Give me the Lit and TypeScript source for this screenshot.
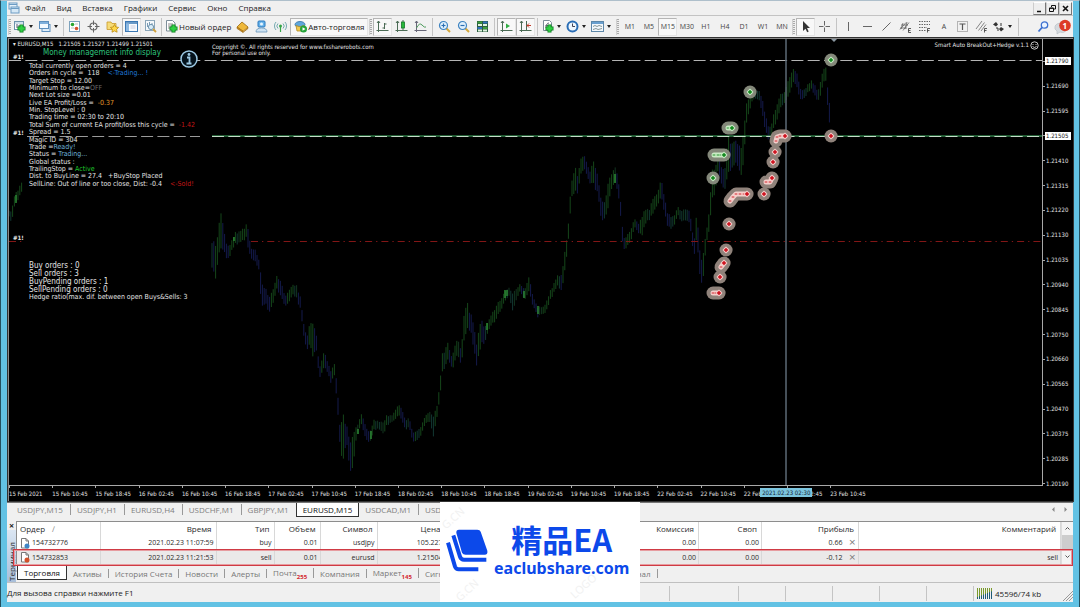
import { LitElement, html, svg, css } from "lit";
import { customElement } from "lit/decorators.js";
import { classMap } from "lit/directives/class-map.js";

/* Price path: x, high, low in chart units. */
const LEFT_BARS = [[9, 211, 216], [12, 210, 223], [14, 197, 208], [16, 193, 203], [18, 190, 200], [20, 184, 194], [23, 183, 192]];
const MAIN_BARS = [
  [212, 238, 268], [215, 240, 283], [218, 230, 262], [221, 209, 253], [225, 236, 255], [228, 247, 261], [232, 240, 250],
  [235, 232, 244], [240, 231, 243], [246, 225, 238], [248, 227, 249], [251, 247, 257], [255, 250, 263], [259, 260, 270],
  [261, 276, 306], [265, 288, 305], [270, 297, 314], [274, 285, 300], [277, 276, 290], [281, 281, 298], [285, 297, 307],
  [289, 289, 302], [293, 284, 294], [297, 286, 300], [301, 300, 312], [304, 325, 338], [307, 338, 352], [310, 320, 345],
  [313, 318, 360], [316, 332, 350], [319, 365, 376], [321, 365, 377], [324, 352, 370], [328, 362, 372], [331, 370, 383],
  [334, 362, 373], [337, 380, 400], [340, 428, 448], [343, 412, 474], [346, 422, 440], [350, 440, 474], [353, 430, 470],
  [356, 425, 440], [358, 425, 434], [361, 412, 422], [364, 422, 436], [367, 430, 442], [370, 432, 443], [374, 420, 430],
  [379, 421, 428], [384, 423, 436], [387, 415, 425], [392, 416, 422], [396, 410, 420], [399, 404, 415], [402, 408, 420],
  [405, 420, 430], [409, 418, 427], [413, 432, 441], [416, 430, 440], [420, 428, 437], [424, 420, 428], [427, 412, 420],
  [431, 412, 424], [433, 413, 438], [437, 405, 417], [440, 385, 400], [442, 350, 372], [445, 350, 368], [447, 338, 360],
  [451, 355, 365], [453, 352, 369], [456, 341, 358], [459, 342, 360], [461, 352, 368], [464, 310, 340], [467, 298, 332],
  [470, 312, 330], [473, 318, 345], [477, 345, 370], [480, 318, 350], [484, 325, 345], [488, 322, 332], [492, 314, 325],
  [496, 305, 320], [500, 300, 312], [505, 290, 300], [509, 288, 296], [513, 290, 311], [517, 290, 300], [520, 283, 290],
  [524, 290, 300], [529, 276, 292], [532, 293, 305], [535, 302, 310], [538, 307, 317], [542, 308, 314], [546, 303, 312],
  [550, 291, 300], [554, 284, 293], [558, 273, 284], [562, 276, 295], [565, 248, 270], [568, 228, 245], [570, 195, 215],
  [572, 180, 198], [575, 162, 192], [578, 175, 193], [580, 160, 178], [583, 154, 170], [587, 162, 175], [590, 170, 183],
  [593, 160, 185], [595, 160, 188], [598, 180, 198], [602, 200, 223], [605, 200, 218], [608, 180, 210], [611, 175, 192],
  [614, 165, 182], [617, 172, 190], [620, 190, 205], [622, 222, 240], [624, 237, 249], [628, 234, 246], [632, 225, 237],
  [635, 220, 228], [639, 223, 233], [642, 215, 237], [645, 208, 225], [649, 210, 220], [653, 198, 215], [657, 195, 208],
  [661, 178, 198], [664, 192, 210], [667, 212, 226], [670, 215, 229], [674, 215, 225], [678, 208, 216], [683, 210, 222],
  [687, 208, 220], [690, 212, 225], [692, 230, 245], [694, 240, 256], [697, 209, 240], [699, 240, 270], [701, 265, 292],
  [703, 250, 280], [705, 240, 260], [707, 226, 240], [710, 200, 225], [712, 170, 205], [715, 165, 195], [718, 158, 172],
  [722, 165, 185], [725, 165, 190], [728, 130, 178], [731, 140, 170], [734, 136, 165], [737, 140, 165], [740, 148, 180],
  [743, 130, 165], [746, 105, 130], [748, 97, 115], [752, 92, 102], [756, 90, 98], [760, 90, 100], [762, 98, 115],
  [765, 110, 128], [768, 125, 140], [771, 125, 137], [774, 112, 128], [778, 100, 118], [780, 94, 110], [784, 92, 103],
  [788, 82, 100], [791, 72, 90], [794, 68, 82], [798, 76, 92], [801, 90, 100], [806, 88, 96], [811, 80, 88],
  [815, 84, 95], [818, 92, 102], [821, 78, 95], [824, 68, 82], [826, 65, 80], [828, 90, 112], [831, 110, 135],
];
const BRIGHT = [[16, 195, 203], [371, 431, 439], [358, 429, 434], [487, 323, 330], [505, 290, 298], [507, 290, 296], [524, 291, 298], [538, 306, 314], [615, 174, 183], [234, 237, 241]];

type Bar = { x: number; hi: number; lo: number; tone: string };
function bars(anchors: number[][]): Bar[] {
  const out: Bar[] = [];
  let k = 0;
  let prev = anchors[0][1];
  for (let x = anchors[0][0]; x <= anchors[anchors.length - 1][0]; x += 1.8) {
    while (k < anchors.length - 2 && anchors[k + 1][0] < x) k++;
    const a = anchors[k], b = anchors[k + 1];
    const t = (x - a[0]) / (b[0] - a[0]);
    const n = Math.sin(x * 12.9898) * 43758.5453;
    const r = n - Math.floor(n);
    const hi = a[1] + (b[1] - a[1]) * t;
    const lo = a[2] + (b[2] - a[2]) * t;
    const cut = (lo - hi) * 0.25;
    const slope = hi - prev;
    prev = hi;
    out.push({
      x,
      hi: hi + cut * r - 1,
      lo: lo - cut * (1 - r) + 1,
      tone: slope < -1 ? "#15461a" : slope > 1 ? "#141a4c" : r > 0.5 ? "#123833" : "#133520",
    });
  }
  return out;
}

type Trade = { side: "buy" | "sell"; pts: number[][] };
const TRADES: Trade[] = [
  { side: "buy", pts: [[831, 60]] },
  { side: "buy", pts: [[750, 92]] },
  { side: "buy", pts: [[728, 128], [732, 128]] },
  { side: "buy", pts: [[714, 155], [718, 155], [721, 155], [724, 155]] },
  { side: "buy", pts: [[713, 178]] },
  { side: "sell", pts: [[831, 136]] },
  { side: "sell", pts: [[776, 141], [777, 137], [780, 136], [785, 136]] },
  { side: "sell", pts: [[775, 152]] },
  { side: "sell", pts: [[773, 162]] },
  { side: "sell", pts: [[766, 182], [770, 182], [772, 178]] },
  { side: "sell", pts: [[764, 194]] },
  { side: "sell", pts: [[730, 201], [733, 197], [736, 194], [740, 194], [744, 194], [747, 194]] },
  { side: "sell", pts: [[729, 224]] },
  { side: "sell", pts: [[726, 250]] },
  { side: "sell", pts: [[721, 267], [724, 263]] },
  { side: "sell", pts: [[720, 277]] },
  { side: "sell", pts: [[713, 293], [716, 293], [719, 293]] },
];

const PRICES = ["1.21790", "1.21690", "1.21595", "1.21505", "1.21410", "1.21315", "1.21220", "1.21130", "1.21035", "1.20940",
  "1.20845", "1.20750", "1.20660", "1.20565", "1.20470", "1.20375", "1.20285", "1.20190"];
const TIMES = ["15 Feb 2021", "15 Feb 10:45", "15 Feb 18:45", "16 Feb 02:45", "16 Feb 10:45", "16 Feb 18:45", "17 Feb 02:45",
  "17 Feb 10:45", "17 Feb 18:45", "18 Feb 02:45", "18 Feb 10:45", "18 Feb 18:45", "19 Feb 02:45", "19 Feb 10:45",
  "19 Feb 18:45", "22 Feb 02:45", "22 Feb 10:45", "22 Feb 18:45", "23 Feb 02:45", "23 Feb 10:45"];

const INFO: string[][] = [
  ["Total currently open orders = 4"],
  ["Orders in cycle =  118    ", "<-Trading... !", "blue"],
  ["Target Stop = 12.00"],
  ["Minimum to close=", "OFF", "dim"],
  ["Next Lot size =0.01"],
  ["Live EA Profit/Loss =  ", "-0.37", "orange"],
  ["Min. StopLevel : 0"],
  ["Trading time = 02:30 to 20:10"],
  ["Total Sum of current EA profit/loss this cycle =  ", "-1.42", "red"],
  ["Spread = 1.5"],
  ["Magic ID = 304"],
  ["Trade =", "Ready!", "sky"],
  ["Status = ", "Trading...", "sky"],
  ["Global status :"],
  ["TrailingStop = ", "Active", "green"],
  ["Dist. to BuyLine = 27.4   +BuyStop Placed"],
  ["SellLine: Out of line or too close, Dist: -0.4    ", "<-Sold!", "red"],
];

const plus = (x: number, y: number) => svg`<path d="M${x} ${y - 4}v8M${x - 4} ${y}h8" stroke="#0a7d1c" stroke-width="4"/><path d="M${x} ${y - 3.2}v6.4M${x - 3.2} ${y}h6.4" stroke="#2fd044" stroke-width="2.400"/>`;
const ICONS: Record<string, unknown> = {
  newchart: svg`<rect x="1.5" y="1.5" width="9" height="8" fill="#fff" stroke="#6d93ad"/><path d="M2 3h8" stroke="#9fc0d8"/><path d="M4 4v4M6 5v3" stroke="#557"/>${plus(8.5, 8.5)}`,
  profiles: svg`<rect x="4" y="4.5" width="8" height="7" fill="#dfeefa" stroke="#5d8fbd"/><rect x="1.5" y="1.5" width="9" height="7" fill="#f4faff" stroke="#5d8fbd"/><path d="M2 3h8" stroke="#7fb0dc" stroke-width="2"/>`,
  market: svg`<rect x="1.5" y="1.5" width="10" height="10" fill="#fff" stroke="#7da2bd"/><circle cx="4.500" cy="4.500" r="1.800" fill="#2aa52f"/><circle cx="8.500" cy="8.500" r="1.800" fill="#d8502c"/><path d="M7 4h3M3 8h3" stroke="#bbb"/>`,
  target: svg`<circle cx="6.500" cy="6.500" r="3.500" fill="none" stroke="#666" stroke-width="1.200"/><path d="M6.500 0.500v4.500M6.500 8v4.500M0.500 6.500h4.500M8 6.500h4.500" stroke="#666"/>`,
  folderstar: svg`<path d="M1 2h4l1 1.500h4v6h-9z" fill="#f6dc7a" stroke="#c9992a" stroke-width=".8"/><path d="M8.500 4.500l1.300 2.500 2.800.4-2 2 .5 2.800-2.600-1.300-2.500 1.300.4-2.800-2-2 2.800-.4z" fill="#ffd84a" stroke="#bd8b12" stroke-width=".8"/>`,
  navigator: svg`<rect x=".5" y="1.500" width="12" height="10" fill="#f7fbff" stroke="#3b78b4"/><path d="M1 3h11" stroke="#3b78b4" stroke-width="1.500"/><rect x="1" y="3.500" width="3" height="7.500" fill="#8db9e2"/><path d="M5.500 6h5M5.500 8h5" stroke="#ccd"/>`,
  tester: svg`<rect x="1.500" y=".5" width="9" height="10" fill="#f4f8fb" stroke="#8aa5b8"/><path d="M3.500 3v4M5.500 2v6M8 3v4" stroke="#5b83a3" stroke-width=".8"/><circle cx="7" cy="7" r="2.600" fill="#d7ecf8" stroke="#6f94ae"/><path d="M9 9l3 3" stroke="#d1a13c" stroke-width="1.800"/>`,
  order: svg`<path d="M1.500.5h6l2.500 2.500v8h-8.500z" fill="#fff" stroke="#7d8d99"/><path d="M3 4h5M3 6h4M3 8h3" stroke="#8a8a8a"/>${plus(8.5, 8.5)}`,
  book: svg`<path d="M1 7l5-5 6 5-5 4.500z" fill="#efb93c" stroke="#9c6a10" stroke-width=".8"/><path d="M1 7v1.500l6 4v-1.500zM7 12.500l5-4v-1.500" fill="#c98a1d" stroke="#9c6a10" stroke-width=".6"/>`,
  vps: svg`<rect x="3" y="1" width="7" height="6" rx="1" fill="#68b3ea" stroke="#2b79bd"/><circle cx="6.500" cy="4" r="1.500" fill="#e8f6ff"/><path d="M1 12q0-4 5.500-4t5.500 4z" fill="#cfe3f3" stroke="#6795ba" stroke-width=".8"/>`,
  signal: svg`<circle cx="6.500" cy="6" r="1.500" fill="#34a545"/><path d="M6.500 7v5" stroke="#34a545" stroke-width="1.200"/><path d="M4 8.500a3.500 3.500 0 0 1 0-5M9 8.500a3.500 3.500 0 0 0 0-5M2 10a6 6 0 0 1 0-8M11 10a6 6 0 0 0 0-8" fill="none" stroke="#76aab0" stroke-width="1"/>`,
  auto: svg`<ellipse cx="6" cy="4.500" rx="5" ry="3" fill="#5fa7dc" stroke="#2d6fa6" stroke-width=".8"/><path d="M2 5.500q4 2.500 8 0l-1 5.500h-6z" fill="#f2c94e" stroke="#b18a22" stroke-width=".8"/><circle cx="9.500" cy="9" r="3.500" fill="#25a33a"/><path d="M8.500 7.200v3.600l3-1.800z" fill="#fff"/>`,
  bars: svg`<path d="M2.500 1v11M.5 10.500h12M8.500 3v6M8.500 4h2M6.500 8h2M1 3l1.500-2 1.500 2" fill="none" stroke="#4b6b55"/>`,
  candles: svg`<path d="M2.500 1v11M.5 10.500h12M1 3l1.500-2 1.500 2M8 0v10" fill="none" stroke="#4b6b55"/><rect x="6.500" y="2" width="3" height="6" fill="#28b83b" stroke="#14772a" stroke-width=".8"/>`,
  linechart: svg`<path d="M2.500 1v11M.5 10.500h12M1 3l1.500-2 1.500 2" fill="none" stroke="#667"/><path d="M2.500 8q3-6 5.500-3t4 2" fill="none" stroke="#4b9a5a"/>`,
  zoomin: svg`<path d="M8 8l4 4" stroke="#d4a73a" stroke-width="2"/><circle cx="5.500" cy="5.500" r="4" fill="#dff0fc" stroke="#3e83c0" stroke-width="1.200"/><path d="M3.500 5.500h4M5.500 3.500v4" stroke="#2a6fb3" stroke-width="1.200"/>`,
  zoomout: svg`<path d="M8 8l4 4" stroke="#d4a73a" stroke-width="2"/><circle cx="5.500" cy="5.500" r="4" fill="#dff0fc" stroke="#3e83c0" stroke-width="1.200"/><path d="M3.500 5.500h4" stroke="#2a6fb3" stroke-width="1.200"/>`,
  tile: svg`<rect x="1" y="1" width="11" height="11" fill="#2a5d3f"/><path d="M1.500 1.500h4.500v2h-4.500zM7 7h4.500v2h-4.500z" fill="#3d9b3d"/><path d="M7 1.500h4.500v2h-4.500zM1.500 7h4.500v2h-4.500z" fill="#2f6fc0"/><path d="M2 4h4v2h-4zM7 4h4v2h-4zM2 9.500h4v2h-4zM7 9.500h4v2h-4z" fill="#dff3df"/>`,
  autoscroll: svg`<path d="M2.500 1v11M.5 10.500h12M1 3l1.500-2 1.500 2" fill="none" stroke="#4b6b55"/><path d="M6 3.500v5l4-2.500z" fill="#2fae42"/>`,
  shift: svg`<path d="M2.500 1v11M.5 10.500h12M1 3l1.500-2 1.500 2M7.500 1v9" fill="none" stroke="#4b6b55"/><path d="M12 5.500h-4M10 3.500l-2 2 2 2" stroke="#c23b2a" fill="none"/>`,
  indicator: svg`<path d="M2.500.5h6l2 2v8h-8z" fill="#fff" stroke="#7d8d99"/><path d="M5 8q0-5 3-5M4.500 5.500h3" stroke="#667" fill="none"/>${plus(8.500, 8.500)}`,
  clock: svg`<circle cx="6.500" cy="6.500" r="5" fill="#eef7ff" stroke="#2a6db5" stroke-width="2"/><path d="M6.500 3.500v3h2.500" fill="none" stroke="#445"/>`,
  template: svg`<rect x=".5" y="1.500" width="12" height="10" fill="#f4f9fd" stroke="#5d87a8"/><path d="M1 3h11" stroke="#6aa0cf" stroke-width="2"/><path d="M2 6.500l2-1 2 1 2-1 3 1M2 9.500l3-1 2 1 4-1" fill="none" stroke="#7a8a8a" stroke-width=".9"/>`,
  cursor: svg`<path d="M4 1v10l2.500-2.300 1.700 3.500 1.500-.8-1.700-3.300h3z" fill="#333"/>`,
  cross: svg`<path d="M6.500 1v4.500M6.500 7.500v4.500M1 6.500h4.500M7.500 6.500h4.500" stroke="#666"/>`,
  vline: svg`<path d="M6.500 2v9" stroke="#666"/>`,
  hline: svg`<path d="M2 6.500h9" stroke="#666"/>`,
  trend: svg`<path d="M2.500 10.500l8-8" stroke="#666"/>`,
  channel: svg`<path d="M1 9.500l6-7M4 10.500l6-8M2 5h7M1 8h7M4 3l-2 6M8 2l-2 7" stroke="#666" stroke-width=".8"/><path d="M12 8.500h-2.500v4h2.500M9.500 10.500h2" fill="none" stroke="#333" stroke-width=".8"/>`,
  fibo: svg`<path d="M1 1.500h11M1 4.500h11M1 7.500h8M1 10.500h7" stroke="#666" stroke-dasharray="1.500 1"/><path d="M12 8.500h-2.500v4M9.500 10.500h2" fill="none" stroke="#333" stroke-width=".8"/>`,
  label: svg`<rect x="1.500" y="1.500" width="10" height="10" fill="none" stroke="#777" stroke-dasharray="1 1"/><path d="M3.500 4h6M6.500 4v6" stroke="#555" stroke-width="1.200"/>`,
  pitchfork: svg`<path d="M1 9l6-8M3.500 10.500l6-8M6 11l5-6.500" stroke="#777" stroke-width=".9"/><path d="M12 8.500h-2.500v4M9.500 10.500h2" fill="none" stroke="#333" stroke-width=".8"/>`,
  arrows: svg`<path d="M1 4.500l3-2.500 2 2.500-2 2zM7 9l2-2 3 2-3 2.500z" fill="#333"/><path d="M4 8h2v3M9 3v3" stroke="#333" fill="none"/>`,
  search: svg`<circle cx="7.500" cy="5" r="3.200" fill="#eaf3ff" stroke="#3c70d0" stroke-width="1.300"/><path d="M5 7.500l-3.500 4" stroke="#3c70d0" stroke-width="1.800"/>`,
};
const icon = (name: string) => html`<svg class="ico" viewBox="0 0 13 13" aria-hidden="true">${ICONS[name]}</svg>`;

type Tool = { i?: string; t?: string; on?: boolean; drop?: boolean; sep?: boolean; tight?: boolean; grip?: boolean; wide?: string };
const TOOLS: Tool[] = [
  { grip: true }, { i: "newchart", drop: true }, { i: "profiles", drop: true }, { sep: true, tight: true },
  { i: "market" }, { i: "target" }, { i: "folderstar" }, { i: "navigator", on: true }, { i: "tester" }, { sep: true, tight: true },
  { i: "order", wide: "Новый ордер" }, { i: "book" }, { i: "vps" }, { i: "signal" }, { i: "auto", wide: "Авто-торговля", on: true },
  { grip: true }, { i: "bars", on: true }, { i: "candles" }, { i: "linechart" }, { sep: true },
  { i: "zoomin" }, { i: "zoomout" }, { i: "tile" }, { sep: true },
  { i: "autoscroll", on: true }, { i: "shift", on: true }, { sep: true },
  { i: "indicator", drop: true }, { i: "clock", drop: true }, { i: "template", drop: true }, { grip: true },
  { t: "M1" }, { t: "M5" }, { t: "M15", on: true }, { t: "M30" }, { t: "H1" }, { t: "H4" }, { t: "D1" }, { t: "W1" }, { t: "MN" },
  { grip: true }, { i: "cursor", on: true }, { i: "cross" }, { sep: true },
  { i: "vline" }, { i: "hline" }, { i: "trend" }, { i: "channel" }, { i: "fibo" }, { t: "A" }, { i: "label" }, { i: "pitchfork" },
  { i: "arrows", drop: true }, { sep: true },
];

@customElement("mt-chart")
class MtChart extends LitElement {
  static styles = css`
    :host { display: grid; grid-template-columns: minmax(0, 1fr) 30px; grid-template-rows: minmax(0, 1fr) 15px; background: #000; color: #e4e4e4;
      font: 6px/8px "DejaVu Sans Condensed", "DejaVu Sans", sans-serif; }
    .plot { position: relative; border-right: 1px solid #a8a8a8; border-bottom: 1px solid #a8a8a8; min-height: 0; }
    .canvas { position: absolute; inset: 0; width: 100%; height: 100%; display: block; }
    .prices { display: grid; grid-auto-rows: 1fr; margin: 10px 0 -10px; }
    .price { display: flex; align-items: center; }
    .price::before { content: ""; width: 2px; height: 1px; background: #a8a8a8; }
    .price.mark span { background: #fff; color: #111; flex: 1; margin-right: 2px; }
    .price span { padding-left: 1px; }
    .times { display: grid; grid-auto-flow: column; grid-auto-columns: 1fr; width: 83.6%; white-space: nowrap; position: relative; }
    .time { line-height: 11px; padding-top: 1px; }
    .time::before { content: ""; display: block; width: 1px; height: 2px; margin-top: -1px; background: #a8a8a8; }
    .now { position: absolute; left: 86.9%; top: 2px; background: #7cc5de; color: #123; line-height: 9px; padding: 0 2px; }
    .over { position: absolute; white-space: pre; }
    .sym { left: 4px; top: 1px; }
    .title { left: 34px; top: 8px; color: #2ec47c; font-size: 8px; line-height: 11px; }
    .info { left: 20px; top: 24px; height: 125px; display: grid; grid-auto-rows: 1fr; font-size: 7px; line-height: 7px; }
    .counts { left: 20px; top: 223px; height: 30px; display: grid; grid-auto-rows: 1fr; font-size: 8px; line-height: 8px; }
    .hedge { left: 20px; top: 254px; font-size: 7px; line-height: 9px; }
    .copy { left: 203px; top: 5px; line-height: 6px; }
    .name { right: 3px; top: 1px; line-height: 10px; display: flex; align-items: center; gap: 1px; }
    .face { width: 9px; height: 9px; }
    .badge { left: 170px; top: 10px; width: 20px; height: 20px; }
    .tag { left: 4px; font-weight: bold; }
    .tag.a { top: 14px; } .tag.b { top: 90px; } .tag.c { top: 195px; }
    .blue { color: #1f78d8; } .dim { color: #6a6a6a; } .orange { color: #e0962a; } .red { color: #c41616; } .sky { color: #6fb4dc; } .green { color: #1fc62c; }
  `;
  render() {
    return html`
      <div class="plot">
        <svg class="canvas" viewBox="9 39 1033 446" preserveAspectRatio="none">
          ${[...bars(LEFT_BARS), ...bars(MAIN_BARS)].map((b) => svg`<path d="M${b.x} ${b.hi}V${b.lo}" stroke=${b.tone} stroke-width="1"/>`)}
          ${BRIGHT.map((b) => svg`<path d="M${b[0]} ${b[1]}V${b[2]}" stroke="#2c8a35" stroke-width="1.500"/>`)}
          <path d="M9 60.500H1042" stroke="#b4b4b4" stroke-dasharray="12 4.300"/>
          <path d="M212 136H1042" stroke="#2d7a45" stroke-width="1.600"/>
          <path d="M27 136.500H200" stroke="#9a9a9a" stroke-dasharray="12 4.300"/>
          <path d="M212 136.500H1042" stroke="#c4dcc8" stroke-dasharray="12 4.300"/>
          <path d="M9 241.500H23M251 241.500H1042" stroke="#821616" stroke-dasharray="7 4 1.300 4"/>
          <path d="M786 39V486" stroke="#5d6a76" stroke-width="1.500"/>
          <path d="M831 39h6l-3 3z" fill="#8b98a2"/>
          ${TRADES.map((t) => {
            const line = "M" + t.pts.map((p) => p.join(" ")).join("L") + "h.1";
            const ink = t.side === "buy" ? "#158a20" : "#cf1420";
            const pale = t.side === "buy" ? "#c9ecc4" : "#f5cfcb";
            const [ex, ey] = t.pts[t.pts.length - 1];
            return svg`
              <path d=${line} fill="none" stroke=${t.side === "buy" ? "#84887a" : "#8f827a"} stroke-width="13" stroke-linecap="round" stroke-linejoin="round"/>
              <path d=${line} fill="none" stroke=${pale} stroke-width="5" stroke-linecap="round" stroke-linejoin="round"/>
              ${t.pts.map(([x, y]) => svg`<path d="M${x - 1.5} ${y}h3M${x} ${y - 1}v2" stroke=${ink} stroke-width=".8" opacity=".7"/>`)}
              <path d="M${ex} ${ey - 3.5}l3.500 3.500-3.500 3.500-3.500-3.500z" fill=${pale}/>
              <path d="M${ex} ${ey - 2.3}l2.300 2.300-2.300 2.300-2.300-2.300z" fill=${ink}/>`;
          })}
        </svg>
        <div class="over sym">▾ EURUSD,M15   1.21505 1.21527 1.21499 1.21501</div>
        <div class="over title">Money management info display</div>
        <svg class="over badge" viewBox="0 0 20 20"><circle cx="10" cy="10" r="8" fill="#04121c" stroke="#9cc9e4" stroke-width="1.500"/><circle cx="10" cy="5.500" r="1.400" fill="#9cc9e4"/><path d="M8 8.500h2.500v6M7.500 14.500h5" fill="none" stroke="#9cc9e4" stroke-width="1.800"/></svg>
        <div class="over copy">Copyright ©. All rights reserved for www.fxsharerobots.com<br />For personal use only.</div>
        <div class="over name">Smart Auto BreakOut+Hedge v.1.1<svg class="face" viewBox="0 0 9 9"><circle cx="4.500" cy="4.500" r="3.700" fill="none" stroke="#ddd" stroke-width=".9"/><path d="M3 3v1M6 3v1M2.500 5.500q2 2 4 0" fill="none" stroke="#ddd" stroke-width=".9"/></svg></div>
        <div class="over tag a">#1!</div><div class="over tag b">#1!</div><div class="over tag c">#1!</div>
        <div class="over info">${INFO.map(([a, b, c]) => html`<div>${a}${b ? html`<span class=${c}>${b}</span>` : ""}</div>`)}</div>
        <div class="over counts">${["Buy orders : 0", "Sell orders : 3", "BuyPending orders : 1", "SellPending orders : 0"].map((s) => html`<div>${s}</div>`)}</div>
        <div class="over hedge">Hedge ratio(max. dif. between open Buys&amp;Sells: 3</div>
      </div>
      <div class="prices">${PRICES.map((p, i) => html`<div class=${classMap({ price: true, mark: i === 0 || i === 3 })}><span>${p}</span></div>`)}</div>
      <div class="times">${TIMES.map((t) => html`<div class="time">${t}</div>`)}<div class="now">2021.02.23 02:30</div></div>
    `;
  }
}

@customElement("mt-terminal")
class MtTerminal extends LitElement {
  static styles = css`
    :host { display: grid; grid-template-columns: 9px minmax(0, 1fr); background: #f0f0f0; color: #2b2b2b; }
    .side { display: flex; flex-direction: column; align-items: center; }
    .x { border: 0; background: none; font: bold 9px/9px "Open Sans", sans-serif; padding: 0; color: #222; }
    .cap { flex: 1; align-self: stretch; background: linear-gradient(#a9bfda, #dbe6f3); writing-mode: vertical-rl; transform: rotate(180deg); font-size: 8px; line-height: 9px; padding-top: 1px; }
    .grid { display: grid; grid-template-columns: minmax(0, 1fr) 12px; border-top: 1px solid #8d8d8d; border-left: 1px solid #8d8d8d; position: relative; }
    table { border-collapse: collapse; table-layout: fixed; width: 100%; background: #fff; }
    th, td { font-weight: normal; text-align: right; padding: 0 2px 0 0; height: 14px; line-height: 14px; border-right: 1px solid #d8d8d8; white-space: nowrap; overflow: hidden; }
    th { padding-right: 4px; }
    td { font-size: 7px; }
    th:first-child, td:first-child { text-align: left; padding-left: 3px; }
    tr.sel td { background: #ebe9e9; height: 15px; }
    .c1 { width: 83px; } .c2 { width: 116px; } .c3 { width: 58px; } .c4 { width: 46px; } .c5 { width: 57px; } .c6 { width: 68px; }
    .c8 { width: 60px; } .c9 { width: 63px; } .c10 { width: 97px; } .c11 { width: 202px; }
    .doc { width: 10px; height: 11px; vertical-align: middle; margin-right: 2px; }
    .del { font: 9px/8px "DejaVu Sans", sans-serif; color: #777; border: 0; background: none; padding: 0; margin: 0 0 0 6px; }
    .sort { color: #888; margin-left: 7px; }
    .frame { position: absolute; left: -4px; right: 0; bottom: -1px; height: 17px; border: 1px solid #cf3a44; box-shadow: inset 0 0 0 1px #e79ca0; box-sizing: border-box; pointer-events: none; }
    .scroll { background: #f4f4f4; display: grid; grid-template-rows: 13px 14px 1fr; border-left: 1px solid #ddd; }
    .thumb { background: #cdcdcd; }
    .arr { width: 11px; height: 13px; fill: none; stroke: #555; }
    .tabs { display: flex; align-items: center; color: #777; height: 16px; padding-left: 1px; white-space: nowrap; overflow: hidden; margin-bottom: 1px; }
    .tab { font: inherit; border: 0; background: none; color: inherit; padding: 0 6px; border-right: 1px solid #999; line-height: 9px; }
    .tab.on { border: 1px solid #333; border-top: 0; background: #fff; color: #111; line-height: 13px; height: 15px; align-self: start; }
    .n { color: #d3262e; font-size: 6px; font-weight: bold; vertical-align: -3px; line-height: 1px; }
  `;
  private row(id: string, time: string, type: string, sym: string, price: string, profit: string, note: string, sel: boolean) {
    return html`<tr class=${sel ? "sel" : ""}>
      <td><svg class="doc" viewBox="0 0 10 11"><path d="M1.500.5h4.500l2.500 2.500v7h-7z" fill="#fff" stroke="#777"/><path d="M6 .5v2.500h2.500" fill="none" stroke="#777"/><circle cx="7" cy="8" r="2.500" fill=${sel ? "#d3502a" : "#3f86c6"}/></svg>${id}</td>
      <td>${time}</td><td>${type}</td><td>0.01</td><td>${sym}</td><td>${price}</td><td></td><td>0.00</td><td>0.00</td>
      <td>${profit}<button class="del" aria-label="Закрыть">×</button></td><td>${note}</td></tr>`;
  }
  render() {
    const tabs: [string, string][] = [["Торговля", ""], ["Активы", ""], ["История Счета", ""], ["Новости", ""], ["Алерты", ""], ["Почта", "255"],
      ["Компания", ""], ["Маркет", "145"], ["Сигналы", ""], ["Статьи", ""], ["Библиотека", ""], ["Эксперты", ""], ["Журнал", ""]];
    return html`
      <div class="side"><button class="x" aria-label="Закрыть">×</button><div class="cap">Терминал</div></div>
      <div>
        <div class="grid">
          <table>
            <colgroup>${[1, 2, 3, 4, 5, 6, 7, 8, 9, 10, 11].map((n) => html`<col class="c${n}" />`)}</colgroup>
            <thead><tr><th>Ордер<span class="sort">∕</span></th><th>Время</th><th>Тип</th><th>Объем</th><th>Символ</th><th>Цена</th><th></th><th>Комиссия</th><th>Своп</th><th>Прибыль</th><th>Комментарий</th></tr></thead>
            <tbody>
              ${this.row("154732776", "2021.02.23 11:07:59", "buy", "usdjpy", "105.227", "0.66", "", false)}
              ${this.row("154732853", "2021.02.23 11:21:53", "sell", "eurusd", "1.21504", "-0.12", "sell", true)}
            </tbody>
          </table>
          <div class="scroll">
            <svg class="arr" viewBox="0 0 11 13"><path d="M3.500 7.500l2-2 2 2"/></svg><div class="thumb"></div>
            <svg class="arr" viewBox="0 0 11 13"><path d="M3.500 6.500l2 2 2-2"/></svg>
          </div>
          <div class="frame"></div>
        </div>
        <div class="tabs">${tabs.map(([t, n], i) => html`<button class="tab ${i === 0 ? "on" : ""}">${t}${n ? html`<span class="n">${n}</span>` : ""}</button>`)}</div>
      </div>`;
  }
}

@customElement("app-root")
class AppRoot extends LitElement {
  static styles = css`
    :host { display: flex; flex-direction: column; box-sizing: border-box; height: 100vh; position: relative; overflow: hidden;
      background: #62c2e4; border: solid #24505f; border-width: 1px 1px 0 1px; border-top-color: #aebfcb; padding: 0 6px 5px 6px; color: #2b2b2b;
      font: 8px/12px "Open Sans", "Noto Sans", sans-serif; }
    .menu { display: flex; align-items: center; height: 14px; background: #f0f0f0; padding: 0 1px; gap: 11px; border-bottom: 1px solid #c3c3c3; }
    .menu a { color: #222; text-decoration: none; }
    .logo { width: 12px; height: 12px; margin: 0 -6px 0 0; }
    .wins { margin-left: auto; display: flex; }
    .win { width: 13px; height: 13px; padding: 0; border: 1px solid; border-color: #fff #777 #777 #ccc; background: #eee; }
    .win svg { display: block; width: 11px; height: 11px; }
    .bar { display: flex; align-items: center; height: 21px; background: #f1f1f1; overflow: hidden; }
    .tool { flex: none; width: 19px; height: 18px; padding: 0; border: 1px solid transparent; background: none; display: flex; align-items: center; justify-content: center; font: 7px/12px "Open Sans", "Noto Sans", sans-serif; color: #444; box-sizing: border-box; }
    .tool.on { background: #f8f8f8; border-color: #b5b5b5 #e4e4e4 #e4e4e4 #b5b5b5; }
    .tool.drop { width: 25px; gap: 3px; justify-content: flex-start; }
    .tool.drop::after { content: ""; border: 2px solid transparent; border-top: 3px solid #222; border-bottom: 0; }
    .tool.wide { width: auto; padding: 0 1px; gap: 1px; color: #222; font-size: 8px; }
    .tool.wide.on { padding: 0 3px; }
    .ico { width: 13px; height: 13px; flex: none; }
    .sep { flex: none; width: 1px; height: 18px; background: #c4c4c4; margin: 0 2px; }
    .sep.tight { margin: 0 1px; }
    .grip { flex: none; width: 2px; height: 16px; border-left: 1px solid #d0d0d0; margin: 0 1px; background: repeating-linear-gradient(#aaa 0 1px, #eee 1px 2px); }
    .end { margin-left: auto; display: flex; align-items: center; }
    .alert { width: 20px; height: 20px; }
    .alert text { font: bold 8px "Open Sans", sans-serif; fill: #fff; }
    mt-chart { flex: 1; min-height: 0; border: solid #8a8a8a; border-width: 1px 0 0 1px; outline: 1px solid #333; margin: 1px 0 1px 1px; }
    .charts { display: flex; align-items: flex-start; height: 16px; background: #f0f0f0; color: #808080; border-top: 1px solid #777; padding-left: 4px; white-space: nowrap; border-bottom: 2px solid #f0f0f0; overflow: hidden; }
    .ct { font: inherit; border: 0; background: none; color: inherit; line-height: 11px; margin-top: 1px; padding: 0 7px 0 6px; border-right: 1px solid #999; }
    .ct.on { margin: 0 0 0 -1px; border: 1px solid #333; border-top: 0; background: #fff; color: #111; line-height: 13px; padding: 0 6px; }
    .nav { margin-left: auto; display: flex; gap: 7px; padding: 4px 5px; }
    .nav svg { width: 5px; height: 5px; }
    .status { display: flex; height: 20px; align-items: stretch; background: #f0f0f0; border-top: 1px solid #c0c0c0; color: #222; box-sizing: border-box; }
    .msg { flex: 1; line-height: 19px; }
    .cell { border-left: 1px solid #c4c4c4; margin: 3px 0 1px; width: 47px; box-sizing: border-box; }
    .cell.first { width: 69px; }
    .net { display: flex; align-items: center; gap: 2px; border-left: 1px solid #c4c4c4; padding-left: 3px; width: 100px; box-sizing: border-box; margin: 3px 0 1px; }
    .sig { width: 16px; height: 11px; flex: none; }
    .size { width: 10px; height: 10px; margin: auto 0 0 auto; }
    .brand { position: absolute; left: 439px; bottom: 5px; width: 200px; height: 100px; background: #fff; overflow: hidden; display: flex; align-items: center; color: #0c49ea; }
    .stack { width: 45px; height: 45px; margin: 0 0 4px 4px; flex: none; }
    .words { display: flex; flex-direction: column; align-items: center; margin: 0 0 4px 5px; }
    .cn { font: bold 31px/36px "Noto Sans CJK SC", sans-serif; }
    .url { font: bold 16px/22px "Noto Sans", sans-serif; }
    .ghost { position: absolute; color: #f1f1f1; font-size: 11px; line-height: 12px; transform: rotate(-42deg); }
    .g1 { left: 0; top: 10px; } .g2 { left: 128px; top: 78px; } .g3 { left: 14px; top: 82px; }
  `;
  private tool(t: Tool) {
    if (t.sep) return html`<span class=${classMap({ sep: true, tight: !!t.tight })}></span>`;
    if (t.grip) return html`<span class="grip"></span>`;
    return html`<button class=${classMap({ tool: true, on: !!t.on, drop: !!t.drop, wide: !!t.wide })} aria-label=${t.wide ?? t.t ?? t.i ?? ""}>${t.i ? icon(t.i) : t.t}${t.wide ?? ""}</button>`;
  }
  render() {
    return html`
      <nav class="menu">
        <svg class="logo" viewBox="0 0 12 12"><rect x="1" y="1" width="8" height="6" fill="#e8f3fb" stroke="#6d9cc4"/><rect x="3" y="5" width="8" height="6" fill="#d5e8f6" stroke="#6d9cc4"/><path d="M1 2.500h8M3 6.500h8" stroke="#6d9cc4"/></svg>
        ${["Файл", "Вид", "Вставка", "Графики", "Сервис", "Окно", "Справка"].map((m) => html`<a href="#">${m}</a>`)}
        <div class="wins">
          <button class="win" aria-label="Свернуть"><svg viewBox="0 0 11 11"><path d="M3 8.500h4" stroke="#111" stroke-width="1.500"/></svg></button>
          <button class="win" aria-label="Восстановить"><svg viewBox="0 0 11 11"><path d="M4.500 4V2.500h4v3.500H7M2.500 5h4v3.500h-4zM2.500 5.300h4" fill="none" stroke="#111"/></svg></button>
          <button class="win" aria-label="Закрыть"><svg viewBox="0 0 11 11"><path d="M3 3l5 5M8 3l-5 5" stroke="#111" stroke-width="1.600"/></svg></button>
        </div>
      </nav>
      <div class="bar">${TOOLS.map((t) => this.tool(t))}
        <div class="end"><button class="tool" aria-label="Поиск">${icon("search")}</button>
        <svg class="alert" viewBox="0 0 20 20"><path d="M2 12q-1-5 5-6t6 5-6 4l-3 2v-3z" fill="#d5dade" stroke="#b4babf" stroke-width=".6"/><circle cx="12" cy="8.500" r="5.800" fill="#dd3a26"/><text x="9.500" y="11.500">1</text></svg></div>
      </div>
      <mt-chart></mt-chart>
      <div class="charts">
        ${["USDJPY,M15", "USDJPY,H1", "EURUSD,H4", "USDCHF,M1", "GBPJPY,M1", "EURUSD,M15", "USDCAD,M1", "USDRUB,M1"].map((t, i) => html`<button class="ct ${i === 5 ? "on" : ""}">${t}</button>`)}
        <div class="nav"><svg viewBox="0 0 5 5"><path d="M3.500 0v5L1 2.500z" fill="#888"/></svg><svg viewBox="0 0 5 5"><path d="M1.500 0v5L4 2.500z" fill="#888"/></svg></div>
      </div>
      <mt-terminal></mt-terminal>
      <div class="status">
        <div class="msg">Для вызова справки нажмите F1</div>
        ${[0, 1, 2, 3, 4, 5].map((i) => html`<div class="cell ${i === 0 ? "first" : ""}"></div>`)}
        <div class="net"><svg class="sig" viewBox="0 0 16 11">${[0, 1, 2, 3, 4, 5, 6, 7].map((i) => svg`<path d="M${i * 2 + 0.5} 0V11" stroke="#7a9a2c"/><path d="M${i * 2 + 0.5} ${9 - i * 0.8}V11" stroke="#1f5a78"/>`)}</svg>45596/74 kb
        <svg class="size" viewBox="0 0 10 10"><path d="M0 10L10 0M3 10l7-7M6 10l4-4" stroke="#999"/></svg></div>
      </div>
      <div class="brand">
        <span class="ghost g1">G.CN</span><span class="ghost g2">LOGO</span><span class="ghost g3">G.CN</span>
        <svg class="stack" viewBox="25 80 135 135"><path d="M70 85H125q8 0 10 6L155 148q2 12-8 12H90q-8 0-11-6L62 95q-1-10 8-10z" fill="#0c49ea"/><path d="M53 102L73 166q3 9 12 9H152M37 124L58 196q3 8 11 8H128" fill="none" stroke="#0c49ea" stroke-width="12" stroke-linejoin="round"/></svg>
        <div class="words"><div class="cn">精品EA</div><div class="url">eaclubshare.com</div></div>
      </div>`;
  }
}
